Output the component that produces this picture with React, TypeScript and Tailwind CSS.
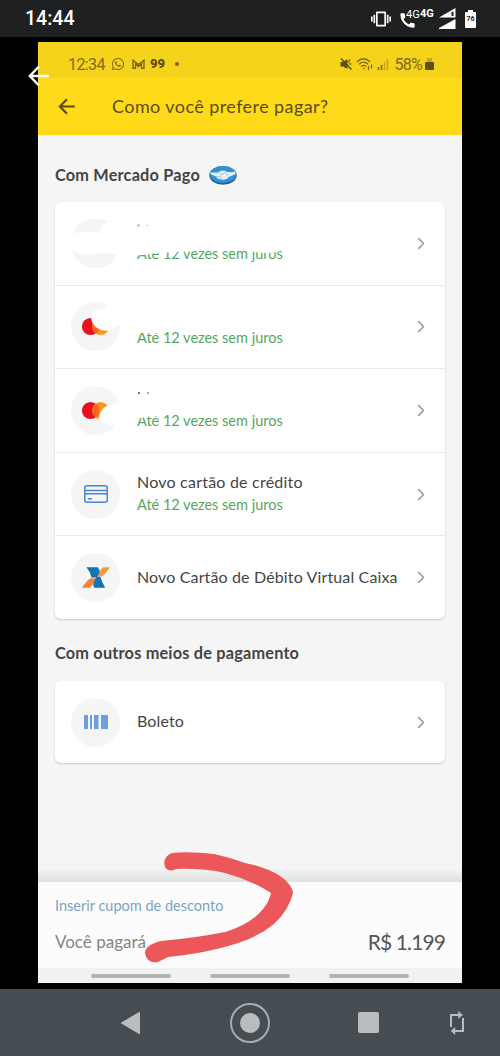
import type { ReactNode } from "react";
import { FaWhatsapp } from "react-icons/fa";
import { MdCall, MdVibration } from "react-icons/md";

const ArrowLeft = ({ className }: { className: string }) => (
  <svg viewBox="0 0 22 22" className={className} fill="none" stroke="currentColor">
    <path d="M21 11H2M11 1.5L1.8 11L11 20.5" />
  </svg>
);

const Chevron = () => (
  <svg viewBox="0 0 8 14" className="h-[13px] w-2 shrink-0" fill="none" stroke="#9a9a9a" strokeWidth="1.6">
    <path d="M1 1.2L6.7 7L1 12.8" />
  </svg>
);

const Handshake = () => (
  <svg viewBox="0 0 28 20" className="h-5 w-7">
    <ellipse cx="14" cy="10.3" rx="13.7" ry="9.4" fill="#17609c" />
    <ellipse cx="14" cy="9.4" rx="13" ry="8.5" fill="#3193d0" />
    <path d="M2 7.2Q8 8.2 11 6L15 5.5Q20 8.5 26 6.6L26.5 9L20 12Q17 15.500 13 14.600Q8 14 7 11.500L1.500 9Z" fill="#e9f1f7" />
    <path d="M3 7.5Q8 9 12 6.4M11 9.5Q14 9.7 15.5 7.5L20.5 12M7 12Q9 10 10.5 12Q12.5 11.5 13 14" fill="none" stroke="#7fa6c4" strokeWidth="0.7" />
  </svg>
);

const HiddenIcon = () => (
  <svg viewBox="0 0 49 49" className="size-[49px]" fill="#f5f5f5">
    <path d="M2 14Q8 0 24 0Q31 0 37 2Q28 6 30 14Q16 12 2 14Z" />
    <path d="M1 32Q15 38 28 34Q38 32 46 37Q39 49 24 49Q8 49 1 32Z" />
  </svg>
);

const MasterIcon = ({ mask }: { mask: string }) => (
  <svg viewBox="0 0 49 49" className="size-[49px]">
    <circle cx="24.5" cy="24.5" r="24.5" fill="#f5f5f5" />
    <circle cx="29.5" cy="24.5" r="8.6" fill="#f79a1c" />
    <circle cx="19.500" cy="24.5" r="8.6" fill="#e8101c" />
    <path d="M24.500 17.500A8.6 8.6 0 0 1 24.500 31.500A8.6 8.6 0 0 1 24.500 17.500Z" fill="#f8651b" />
    <path d={mask} fill="#fff" />
  </svg>
);

const Round = ({ children }: { children: ReactNode }) => (
  <div className="flex size-[49px] items-center justify-center rounded-full bg-[#f5f5f5]">{children}</div>
);

const CardIcon = () => (
  <svg viewBox="0 0 24 18" className="h-[18px] w-6" fill="none" stroke="#4a86d0" strokeWidth="1.5">
    <rect x="0.8" y="0.8" width="22.4" height="16.4" rx="2" />
    <path d="M1 5.4H23M1 8.8H23M3.8 13.8H8" />
  </svg>
);

const CaixaIcon = () => (
  <svg viewBox="0 0 82 60" className="h-[21px] w-7">
    <path d="M13 0H46Q52 6 52 16Q52 24 46 28H54Q58 44 68 60H36Q31 52 34 42Q36 34 42 30H28Q25 14 13 0Z" fill="#1273b5" />
    <path d="M82 0H62Q54 4 51 16L45 27H59Q70 18 82 0Z" fill="#f39a3d" />
    <path d="M0 60H22Q32 54 36 40L41 32H26Q12 40 0 60Z" fill="#f08437" />
  </svg>
);

const BarcodeIcon = () => (
  <svg viewBox="0 0 24 14" className="h-[14px] w-6" fill="#6a9fe0">
    <path d="M0 0H4V14H0ZM6 0H8V14H6ZM10 0H14.500V14H10ZM17 0H24V14H17Z" />
  </svg>
);

const Juros = () => (
  <span className="block pt-px text-[14.5px] leading-[21px] tracking-normal whitespace-nowrap text-[#52a862]">
    Até 12 vezes sem juros
  </span>
);

const Row = ({ icon, children }: { icon: ReactNode; children: ReactNode }) => (
  <div className="flex flex-1 items-center border-b border-[#eaeaea] pr-5 pl-4 last:border-b-0">
    {icon}
    <div className="relative mb-[2px] ml-[17px] flex-1 text-[16px] leading-[22px] tracking-[0.14px] whitespace-nowrap text-[#444]">
      {children}
    </div>
    <Chevron />
  </div>
);

const StatusBar = () => (
  <div className="flex h-[37px] shrink-0 items-center bg-[#1f2022] pr-6 pl-[25px] font-['Roboto',sans-serif] text-white">
    <span className="flex-1 pt-px text-[19.5px] font-medium">14:44</span>
    <MdVibration className="mr-2 size-[20px]" />
    <div className="relative mr-[5px] h-5 w-[35px]">
      <MdCall className="absolute top-[2px] -left-px size-[19px]" />
      <span className="absolute -top-px left-[7px] text-[11px] leading-[14px]">4G</span>
      <span className="absolute -top-[2px] left-[21px] text-[11px] leading-[14px] font-bold">4G</span>
    </div>
    <svg viewBox="0 0 17 22" className="mr-[9px] h-[22px] w-[17px]" fill="#fff">
      <path d="M0 9.500L16.5 0V9.500Z" />
      <path d="M13.500 3.800V8" stroke="#1f2022" strokeWidth="2" />
      <path d="M0 21V20L16.500 11V21Z" />
    </svg>
    <div className="flex flex-col items-center">
      <i className="h-[2px] w-[5px] bg-white" />
      <div className="flex h-4 w-[11px] items-center justify-center rounded-[1px] bg-white text-[7px] font-bold text-[#222]">76</div>
    </div>
  </div>
);

const InnerStatus = () => (
  <div className="flex h-[36px] items-center bg-[#f5d31b] pt-2 pr-7 pl-[30px] font-['Roboto',sans-serif] text-[16px] text-[#7d6a16]">
    <span className="w-[43px] pt-px tracking-[-0.6px]">12:34</span>
    <FaWhatsapp className="size-[14px]" />
    <svg viewBox="0 0 13 10" className="ml-[7px] h-[10px] w-[13px]" fill="none" stroke="currentColor" strokeWidth="1.4">
      <path d="M1 9.300V1.200L6.500 5.500L12 1.200V9.300H9.500V5L6.500 7.600L3.500 5V9.300Z" />
    </svg>
    <span className="ml-[5px] text-[13px] font-black text-[#5e4f10]">99</span>
    <i className="ml-[10px] size-1 rounded-full bg-current" />
    <div className="flex-1" />
    <svg viewBox="0 0 12 12" className="mr-px h-3 w-3" fill="#5e4f10">
      <path d="M0.500 4H3L7.500 1V11L3 8.500H0.500Z" />
      <path d="M1 0.500L11.500 11.500" stroke="#5e4f10" strokeWidth="1.500" />
      <path d="M8.500 4.500L10 1.500M9 6H11.500" stroke="#5e4f10" strokeWidth="1.200" />
    </svg>
    <svg viewBox="0 0 17 14" className="ml-[3px] h-[14px] w-[17px]" fill="none" stroke="currentColor" strokeWidth="1.300">
      <path d="M1 5Q7.500 -1.500 14 5M3 7.300Q7.500 3 12 7.300M5 9.500Q7.500 7.300 10 9.500M7 11.500H8.500M12.500 9V13M15.500 7.500V11.500" />
    </svg>
    <svg viewBox="0 0 12 12" className="mr-[5px] ml-1 h-3 w-3">
      <path d="M1.500 9V12M4.500 7V12" stroke="#7d6a16" strokeWidth="1.600" />
      <path d="M7.500 4V12M10.500 1V12" stroke="#c4a91e" strokeWidth="1.600" />
    </svg>
    <span className="pt-px tracking-[-0.7px]">58%</span>
    <div className="ml-[3px] flex flex-col items-center">
      <i className="h-1 w-[5px] bg-[#c4a91e]" />
      <i className="h-2 w-[9px] rounded-[1px] bg-[#5e4f10]" />
    </div>
  </div>
);

const PhoneScreen = () => (
  <div className="mx-[38px] mt-[5px] flex h-[941px] shrink-0 flex-col bg-[#f5f5f5]">
    <InnerStatus />
    <div className="flex h-[57px] items-center bg-[#ffda18] pl-5 text-[#5b4c12]">
      <ArrowLeft className="h-[17px] w-[18px] stroke-[2.8]" />
      <h1 className="ml-9 text-[18px] tracking-[0.42px]">Como você prefere pagar?</h1>
    </div>

    <div className="flex h-[67px] items-center pt-[12px] pl-[17px]">
      <h2 className="mr-2 w-[146px] pt-[2px] text-[16.3px] font-bold tracking-[0.2px] whitespace-nowrap text-[#444]">Com Mercado Pago</h2>
      <Handshake />
    </div>
    <div className="mx-[17px] flex h-[417px] flex-col rounded-md bg-white shadow-[0_1px_2px_rgba(0,0,0,0.2)]">
      <Row icon={<HiddenIcon />}>
        <div className="h-[22px]" />
        <Juros />
        <svg viewBox="0 0 150 42" className="absolute top-0 left-0 h-[42px] w-[150px]">
          <circle cx="1.500" cy="5.500" r="1" fill="#888" />
          <circle cx="10.500" cy="5.500" r="0.800" fill="#bbb" />
          <path d="M-2 22H150V29Q135 35 118 32Q95 26 75 30L43 32L20 33L-2 36Z" fill="#fff" />
        </svg>
      </Row>
      <Row icon={<MasterIcon mask="M39 2Q31 8 22 9Q17 19 26 26Q36 33 50 22V0Z" />}>
        <div className="h-[22px]" />
        <Juros />
        <div className="absolute top-[25px] left-0 h-1 w-[22px] bg-white" />
      </Row>
      <Row icon={<MasterIcon mask="M50 13Q43 19 37 19Q28 24 28 33Q32 41 50 39Z" />}>
        <div className="h-[22px]" />
        <Juros />
        <svg viewBox="0 0 24 32" className="absolute top-0 left-0 h-8 w-6">
          <circle cx="2" cy="6" r="1" fill="#444" />
          <circle cx="11" cy="6" r="0.900" fill="#888" />
          <path d="M0 22H22V29Q10 29 0 32Z" fill="#fff" />
        </svg>
      </Row>
      <Row icon={<Round><CardIcon /></Round>}>
        <span className="block tracking-[0.22px]">Novo cartão de crédito</span>
        <Juros />
      </Row>
      <Row icon={<Round><CaixaIcon /></Round>}>Novo Cartão de Débito Virtual Caixa</Row>
    </div>

    <div className="flex h-[62px] items-center pt-[7px] pl-[17px]">
      <h2 className="text-[16.3px] font-bold tracking-[0.2px] text-[#444]">Com outros meios de pagamento</h2>
    </div>
    <div className="mx-[17px] flex h-[82px] flex-col rounded-md bg-white shadow-[0_1px_2px_rgba(0,0,0,0.2)]">
      <Row icon={<Round><BarcodeIcon /></Round>}>Boleto</Row>
    </div>

    <div className="mt-auto h-[14px] bg-linear-to-b from-[#f5f5f5] to-[#dfdfdf]" />
    <div className="flex h-[86px] flex-col bg-[#fcfcfc] px-[17px] pt-[14px]">
      <span className="text-[14.5px] leading-5 text-[#7ba3c2]">Inserir cupom de desconto</span>
      <div className="mt-[10px] flex items-center justify-between leading-[30px]">
        <span className="pt-px text-[17px] text-[#858585]">Você pagará</span>
        <span className="text-[21px] tracking-[-0.9px] text-[#555]">R$ 1.199</span>
      </div>
    </div>
    <div className="flex h-[15px] items-center justify-center gap-[39px] bg-[#f1f1f1]">
      <i className="h-1 w-20 rounded-full bg-[#b3b3b3]" />
      <i className="h-1 w-20 rounded-full bg-[#b3b3b3]" />
      <i className="h-1 w-20 rounded-full bg-[#b3b3b3]" />
    </div>
  </div>
);

const NavBar = () => (
  <div className="mt-auto flex h-[67px] shrink-0 items-center bg-[#464d52] pl-[120px] text-[#babdbf]">
    <svg viewBox="0 0 21 24" className="h-6 w-[21px]" fill="currentColor">
      <path d="M0.500 12L19 1Q20 0.500 20 1.500V22.500Q20 23.500 19 23Z" />
    </svg>
    <div className="ml-[89px] flex size-10 items-center justify-center rounded-full border-2 border-[#a6abb0]">
      <i className="size-5 rounded-full bg-current" />
    </div>
    <i className="ml-[88px] size-[21px] rounded-[2px] bg-current" />
    <svg viewBox="0 0 16 24" className="ml-[70px] h-6 w-4" fill="none" stroke="currentColor" strokeWidth="2">
      <path d="M2 16V4H12M14 7V20H4" />
      <path d="M9.500 0.500L13.500 4L9.500 7.500ZM6 16.500L2 20L6 23.500Z" fill="currentColor" strokeWidth="0.500" />
    </svg>
  </div>
);

const App = () => {
  return (
    <div className="relative flex h-[1056px] w-[500px] flex-col overflow-hidden bg-black font-['Lato',sans-serif]">
      <StatusBar />
      <PhoneScreen />
      <NavBar />
      <ArrowLeft className="absolute top-[65px] left-7 size-[22px] stroke-[2.4] text-white" />
      {/* red marker pointing at the coupon link */}
      <svg viewBox="140 848 160 120" className="absolute top-[848px] left-[140px] h-[120px] w-40">
        <path
          d="M172 853Q188 851 214 854Q228 857 245 863Q266 867 280 876Q292 884 293 893Q289 910 274 924Q258 937 235 944Q207 953 168 957L158 962Q147 964 145 953Q145 945 161 941Q195 938 225 932Q251 924 263 909Q269 902 271 893Q251 880 225 873Q203 868 176 869Q169 873 165 867Q162 857 172 853Z"
          fill="#ec5759"
        />
      </svg>
    </div>
  );
};

export default App;
